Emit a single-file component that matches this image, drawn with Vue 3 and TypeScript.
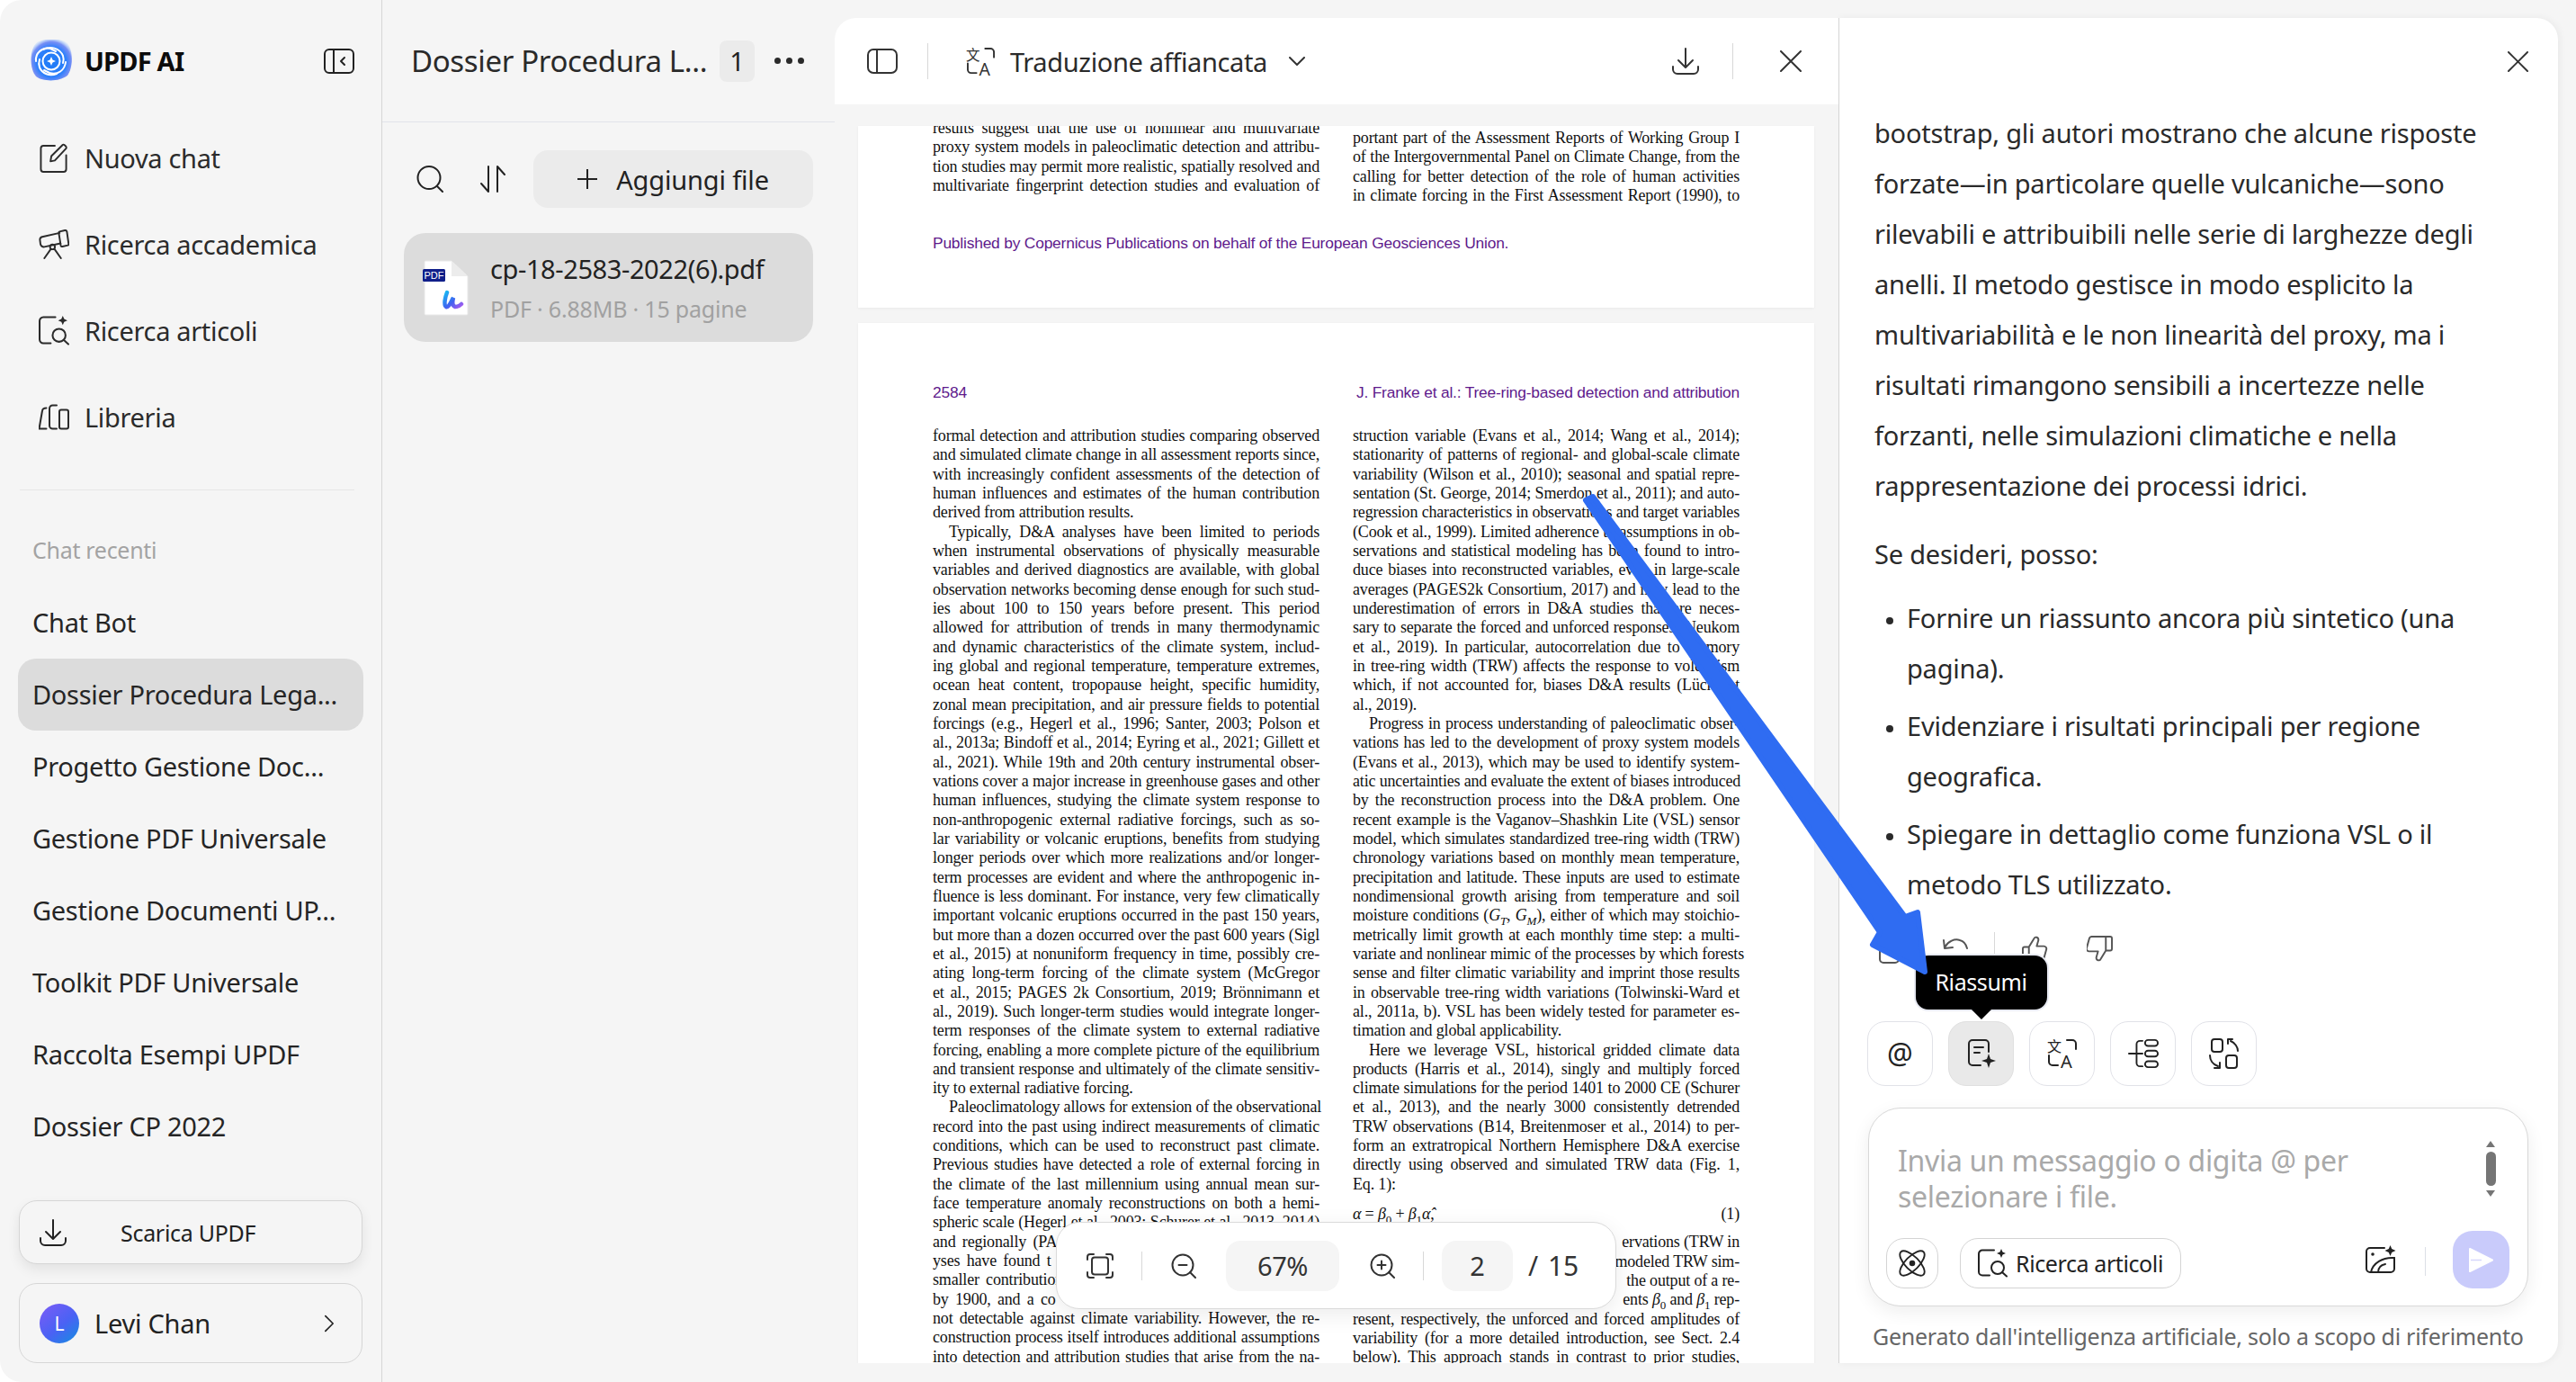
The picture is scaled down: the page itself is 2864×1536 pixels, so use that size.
<template>
  <div class="app">
    <!-- shared icons -->
    <svg class="defs" width="0" height="0">
      <symbol id="i-article" viewBox="0 0 33 32">
        <path d="M18 1.500H5a4 4 0 0 0-4 4v20a4 4 0 0 0 4 4h8" />
        <circle cx="22" cy="21" r="7" />
        <path d="M27 26l5 4.500" />
        <path d="M26 0l1.500 3.500L31 5l-3.500 1.500L26 10l-1.500-3.500L21 5l3.500-1.500z" fill="currentColor" stroke="none" />
      </symbol>
      <symbol id="i-download" viewBox="0 0 30 30">
        <path d="M15 1v20M7 14l8 8 8-8M1 21v3a5 5 0 0 0 5 5h18a5 5 0 0 0 5-5v-3" />
      </symbol>
      <symbol id="i-close" viewBox="0 0 24 24">
        <path d="M1 1l22 22M23 1L1 23" />
      </symbol>
    </svg>

    <!-- left navigation -->
    <aside class="sidebar">
      <div class="brand">
        <svg class="logo" viewBox="0 0 48 46">
          <defs>
            <radialGradient id="logoFill" cx="50%" cy="56%" r="60%">
              <stop offset="0" stop-color="#1f7bf6" />
              <stop offset="0.6" stop-color="#2d80fb" />
              <stop offset="0.82" stop-color="#5f7cf5" stop-opacity="0.85" />
              <stop offset="1" stop-color="#9fd0ff" stop-opacity="0.15" />
            </radialGradient>
          </defs>
          <path d="M8 3c10-5 27-5 34 1 7 9 6 28 0 36-9 7-27 7-35 1C0 33-1 11 8 3z" fill="url(#logoFill)" />
          <g fill="none" stroke="#fff" stroke-width="2" stroke-linecap="round">
            <path d="M15 11c8-4 18-2 22 7 1 3 1 5 0 8" />
            <path d="M40 25c-1 9-9 15-18 12-2-1-4-2-6-3" />
            <path d="M30 38c-8 3-16 0-19-7-1-3-1-6 0-9" />
            <path d="M7 24C6 15 14 8 23 10c2 1 4 2 6 3" />
            <circle cx="24" cy="24" r="9.500" />
          </g>
          <path d="M24 19l1.500 3.500L29 24l-3.500 1.500L24 29l-1.500-3.500L19 24l3.500-1.500z" fill="#fff" />
        </svg>
        <span class="brand-name">UPDF AI</span>
        <svg class="brand-toggle ic" viewBox="0 0 34 28">
          <rect x="1" y="1" width="32" height="26" rx="5" />
          <path d="M11 1v26M23 10l-4 4 4 4" />
        </svg>
      </div>

      <nav class="nav">
        <div class="nav-item">
          <svg class="nav-ic ic" viewBox="0 0 34 34">
            <path d="M18 3H5a3 3 0 0 0-3 3v24a3 3 0 0 0 3 3h23a3 3 0 0 0 3-3V14" />
            <path d="M13 21l1-6L27 2c1-1 5 2 4 4L18 20z" />
          </svg>
          <span>Nuova chat</span>
        </div>
        <div class="nav-item">
          <svg class="nav-ic ic" viewBox="0 0 34 34">
            <path d="M23.500 4L3.500 8.500A3.500 3.500 0 0 0 1 12.500l.5 4a4 4 0 0 0 4.500 3.500l18.500-4" />
            <path d="M22.500 4a1.500 1.500 0 0 1 1-1.500l6-1.500a2 2 0 0 1 2.300 1.500l2 14a1.500 1.500 0 0 1-1 1.700l-6 1.300a1.500 1.500 0 0 1-2-1z" />
            <circle cx="15.300" cy="20" r="2.800" />
            <path d="M13 23l-7 10M18 23l7 10" />
          </svg>
          <span>Ricerca accademica</span>
        </div>
        <div class="nav-item">
          <svg class="nav-ic ic"><use href="#i-article" /></svg>
          <span>Ricerca articoli</span>
        </div>
        <div class="nav-item">
          <svg class="nav-ic ic" viewBox="0 0 34 30">
            <path d="M.5 28L4 8c.3-2 2-3 4.500-3M.5 28h8" />
            <path d="M20 2h-4.500A3.500 3.500 0 0 0 12 5.500v19a3.500 3.500 0 0 0 3.500 3.500H20" />
            <rect x="23" y="7" width="10" height="21" rx="2" />
          </svg>
          <span>Libreria</span>
        </div>
      </nav>

      <div class="side-rule"></div>
      <div class="recent-label">Chat recenti</div>
      <div class="recent">
        <div v-for="c in chats" :key="c" class="recent-item" :class="{ active: c === activeChat }">{{ c }}</div>
      </div>

      <div class="side-bottom">
        <div class="get-app">
          <svg class="get-ic ic"><use href="#i-download" /></svg>
          <span>Scarica UPDF</span>
        </div>
        <div class="account">
          <span class="avatar">L</span>
          <span class="account-name">Levi Chan</span>
          <svg class="account-arrow ic" viewBox="0 0 12 22"><path d="M1 1l10 10L1 21" /></svg>
        </div>
      </div>
    </aside>

    <!-- file list -->
    <section class="files">
      <header class="files-head">
        <span class="files-title">Dossier Procedura L...</span>
        <span class="files-count">1</span>
        <span class="dots"><i></i><i></i><i></i></span>
      </header>
      <div class="files-tools">
        <svg class="tool-search ic" viewBox="0 0 30 30">
          <circle cx="14" cy="13.500" r="12.500" />
          <path d="M23 23l6 6" />
        </svg>
        <svg class="tool-sort ic" viewBox="0 0 28 30">
          <path d="M9 1v28L1 20M19 29V1l8 9" />
        </svg>
        <button class="add-file">
          <svg class="add-ic ic" viewBox="0 0 22 22"><path d="M11 0v22M0 11h22" /></svg>
          <span>Aggiungi file</span>
        </button>
      </div>
      <div class="file-card">
        <svg class="file-ic" viewBox="0 0 52 62">
          <defs>
            <linearGradient id="uFill" x1="0" y1="0" x2="1" y2="1">
              <stop offset="0" stop-color="#18b7f2" />
              <stop offset="0.55" stop-color="#3f63f0" />
              <stop offset="1" stop-color="#a35cf0" />
            </linearGradient>
          </defs>
          <path d="M4 1h29l18 17v42a1 1 0 0 1-1 1H4a1 1 0 0 1-1-1V2a1 1 0 0 1 1-1z" fill="#fff" stroke="#e8e8e8" />
          <path d="M33 1l18 17H33z" fill="#ececec" />
          <rect x="1" y="10" width="25" height="14" rx="1.500" fill="#101f8a" />
          <text x="13.500" y="21" text-anchor="middle" font-size="11" fill="#fff" font-family="'Liberation Sans', sans-serif">PDF</text>
          <path d="M28 36c-2 5-4 14-1 16 3 1 5-5 8-10-1 4-1 9 2 10 2 0 5-1 7-3" fill="none" stroke="url(#uFill)" stroke-width="4.500" stroke-linecap="round" />
        </svg>
        <div class="file-text">
          <div class="file-name">cp-18-2583-2022(6).pdf</div>
          <div class="file-meta">PDF · 6.88MB · 15 pagine</div>
        </div>
      </div>
    </section>

    <!-- pdf viewer -->
    <section class="doc">
      <header class="doc-head">
        <svg class="doc-panel ic" viewBox="0 0 34 28">
          <rect x="1" y="1" width="32" height="26" rx="6" />
          <path d="M11 1v26" />
        </svg>
        <span class="doc-rule"></span>
        <svg class="doc-trans ic" viewBox="0 0 34 34">
          <text x="0" y="15" font-size="16" fill="currentColor" stroke="none" font-family="'Noto Sans CJK SC', sans-serif">文</text>
          <text x="15" y="33" font-size="20" fill="currentColor" stroke="none" font-family="'Noto Sans', sans-serif">A</text>
          <path d="M22 2h6a4 4 0 0 1 4 4v6M2 19v7a4 4 0 0 0 4 4h6" />
        </svg>
        <span class="doc-mode">Traduzione affiancata</span>
        <svg class="doc-chev ic" viewBox="0 0 18 10"><path d="M1 1l8 8 8-8" /></svg>
        <svg class="doc-dl ic"><use href="#i-download" /></svg>
        <span class="doc-rule right"></span>
        <svg class="doc-x ic"><use href="#i-close" /></svg>
      </header>

      <div class="pdf">
        <div class="page page-one">
          <div class="cols cols-one">
            <div class="col">
              <div v-for="(l, i) in prevLeft" :key="i" class="ln">{{ l }}</div>
            </div>
            <div class="col col-shift">
              <div v-for="(l, i) in prevRight" :key="i" class="ln">{{ l }}</div>
            </div>
          </div>
          <div class="pub">Published by Copernicus Publications on behalf of the European Geosciences Union.</div>
        </div>

        <div class="page page-two">
          <div class="running">
            <span>2584</span>
            <span>J. Franke et al.: Tree-ring-based detection and attribution</span>
          </div>
          <div class="cols">
            <div class="col">
              <div v-for="(l, i) in leftCol" :key="i" class="ln" :class="lineClass(l)">{{ lineText(l) }}</div>
            </div>
            <div class="col">
              <template v-for="(l, i) in rightCol" :key="i">
                <div v-if="l === '='" class="ln eq">
                  <span class="eq-body"><i>α</i> = <i>β</i><sub>0</sub> + <i>β</i><sub>1</sub><i>α̂</i>,</span>
                  <span>(1)</span>
                </div>
                <div v-else-if="l === 'G'" class="ln">moisture conditions (<i>G</i><sub><i>T</i></sub>, <i>G</i><sub><i>M</i></sub>), either of which may stoichio-</div>
                <div v-else-if="l === 'B'" class="ln frag-r">ents <i>β</i><sub>0</sub> and <i>β</i><sub>1</sub> rep-</div>
                <div v-else class="ln" :class="lineClass(l)">{{ lineText(l) }}</div>
              </template>
            </div>
          </div>
        </div>

        <div class="zoombar">
          <svg class="zb-fit ic" viewBox="0 0 30 28">
            <rect x="6" y="4.500" width="18" height="19" rx="3" />
            <path d="M1 7V4a3 3 0 0 1 3-3h4M22 1h4a3 3 0 0 1 3 3v3M1 21v3a3 3 0 0 0 3 3h4M22 27h4a3 3 0 0 0 3-3v-3" />
          </svg>
          <span class="zb-rule"></span>
          <svg class="zb-mag ic" viewBox="0 0 28 28">
            <circle cx="13" cy="13" r="11.500" />
            <path d="M21 21l6 6M8.500 13h9" />
          </svg>
          <span class="zb-pct">67%</span>
          <svg class="zb-mag ic" viewBox="0 0 28 28">
            <circle cx="13" cy="13" r="11.500" />
            <path d="M21 21l6 6M8.500 13h9M13 8.500v9" />
          </svg>
          <span class="zb-rule"></span>
          <span class="zb-page">2</span>
          <span class="zb-total">/ 15</span>
        </div>
      </div>
    </section>

    <!-- assistant -->
    <section class="chat">
      <header class="chat-head">
        <svg class="chat-x ic"><use href="#i-close" /></svg>
      </header>
      <div class="answer">
        <p class="para">bootstrap, gli autori mostrano che alcune risposte forzate—in particolare quelle vulcaniche—sono rilevabili e attribuibili nelle serie di larghezze degli anelli. Il metodo gestisce in modo esplicito la multivariabilità e le non linearità del proxy, ma i risultati rimangono sensibili a incertezze nelle forzanti, nelle simulazioni climatiche e nella rappresentazione dei processi idrici.</p>
        <p class="para offer">Se desideri, posso:</p>
        <ul class="offers">
          <li>Fornire un riassunto ancora più sintetico (una pagina).</li>
          <li>Evidenziare i risultati principali per regione geografica.</li>
          <li>Spiegare in dettaglio come funziona VSL o il metodo TLS utilizzato.</li>
        </ul>
        <div class="reactions">
          <svg class="re-copy ic" viewBox="0 0 30 30">
            <rect x="1" y="8" width="21" height="21" rx="4" />
            <path d="M8 4a3 3 0 0 1 3-3h15a3 3 0 0 1 3 3v15" />
          </svg>
          <svg class="re-undo ic" viewBox="0 0 28 24">
            <path d="M2 11C6 4 13 1 19 3c4 1 7 5 8 9M1 3l1 9 9-1" />
          </svg>
          <span class="re-rule"></span>
          <svg class="re-thumb ic" viewBox="0 0 30 30">
            <path d="M8 13v16M1 15a2 2 0 0 1 2-2h5l6-10c1-2 5-2 5 2l-2 7h8a3 3 0 0 1 3 4l-3 11a3 3 0 0 1-3 2H3a2 2 0 0 1-2-2z" />
          </svg>
          <svg class="re-thumb down ic" viewBox="0 0 30 30">
            <path d="M22 17V1M29 15a2 2 0 0 1-2 2h-5l-6 10c-1 2-5 2-5-2l2-7H3a3 3 0 0 1-3-4l3-11a3 3 0 0 1 3-2h21a2 2 0 0 1 2 2z" />
          </svg>
        </div>
      </div>

      <div class="quick">
        <button class="q-btn"><span class="q-at">@</span></button>
        <button class="q-btn on">
          <svg class="q-ic ic" viewBox="0 0 34 34">
            <path d="M16 30H7a4 4 0 0 1-4-4V6a4 4 0 0 1 4-4h14a4 4 0 0 1 4 4v9M9 10h10M9 16h6" />
            <path d="M25 17l2 6 6 2-6 2-2 6-2-6-6-2 6-2z" fill="currentColor" stroke="none" />
          </svg>
          <span class="tip">Riassumi</span>
        </button>
        <button class="q-btn">
          <svg class="q-ic ic" viewBox="0 0 34 34">
            <text x="0" y="15" font-size="16" fill="currentColor" stroke="none" font-family="'Noto Sans CJK SC', sans-serif">文</text>
            <text x="15" y="33" font-size="20" fill="currentColor" stroke="none" font-family="'Noto Sans', sans-serif">A</text>
            <path d="M22 2h6a4 4 0 0 1 4 4v6M2 19v7a4 4 0 0 0 4 4h6" />
          </svg>
        </button>
        <button class="q-btn">
          <svg class="q-ic ic" viewBox="0 0 36 34">
            <path d="M1 17h16M17 2h-3a4 4 0 0 0-4 4v22a4 4 0 0 0 4 4h3" />
            <rect x="20" y="1" width="15" height="7" rx="3.500" />
            <rect x="20" y="13.500" width="15" height="7" rx="3.500" />
            <rect x="20" y="26" width="15" height="7" rx="3.500" />
          </svg>
        </button>
        <button class="q-btn">
          <svg class="q-ic ic" viewBox="0 0 34 34">
            <rect x="3" y="1" width="12" height="14" rx="3" />
            <rect x="19" y="19" width="12" height="14" rx="3" />
            <path d="M32 14c0-4-3-9-8-11M21 1h5M21 1v5M1 19c0 5 3 10 9 12M12 33H6M12 33v-6" />
          </svg>
        </button>
      </div>

      <div class="composer">
        <div class="prompt">
          <div class="placeholder">Invia un messaggio o digita @ per selezionare i file.</div>
          <div class="scroll">
            <i class="arr up"></i>
            <i class="thumb"></i>
            <i class="arr dn"></i>
          </div>
        </div>
        <div class="composer-row">
          <button class="pill atom">
            <svg class="atom-ic ic" viewBox="0 0 32 32">
              <ellipse cx="16" cy="16" rx="8" ry="19" transform="rotate(-45 16 16)" />
              <ellipse cx="16" cy="16" rx="8" ry="19" transform="rotate(45 16 16)" />
              <circle cx="16" cy="16" r="3.500" fill="currentColor" stroke="none" />
            </svg>
          </button>
          <button class="pill articles">
            <svg class="art-ic ic"><use href="#i-article" /></svg>
            <span>Ricerca articoli</span>
          </button>
          <svg class="img-ic ic" viewBox="0 0 34 32">
            <path d="M21 3H5a4 4 0 0 0-4 4v19a4 4 0 0 0 4 4h23a4 4 0 0 0 4-4V14" />
            <circle cx="8" cy="10" r="1.800" fill="currentColor" stroke="none" />
            <path d="M6 30c2-10 13-17 26-16M14 30c0-5 3-8 8-9" />
            <path d="M27.500 0l1.700 4 4.300 2-4.300 2-1.700 4-1.700-4-4.300-2 4.300-2z" fill="currentColor" stroke="none" />
          </svg>
          <span class="row-rule"></span>
          <button class="send">
            <svg class="send-ic" viewBox="0 0 29 29">
              <path d="M2 2l25 12.500L2 27z" fill="#fff" stroke="#fff" stroke-width="2" stroke-linejoin="round" />
              <path d="M3 14.500h12" fill="none" stroke="#d6d7fb" stroke-width="1.500" />
            </svg>
          </button>
        </div>
      </div>
      <div class="disclaimer">Generato dall'intelligenza artificiale, solo a scopo di riferimento</div>
    </section>

    <!-- annotation drawn over the screenshot -->
    <svg class="annot" viewBox="0 0 2864 1536">
      <path d="M1763 556L1771 552L2118 1019L2132 1014L2140 1080L2082 1050L2090 1036Z" fill="#2f6cf2" stroke="#2f6cf2" stroke-width="6" stroke-linejoin="round" />
    </svg>
  </div>
</template>

<script setup lang="ts">
const chats = [
  'Chat Bot',
  'Dossier Procedura Lega...',
  'Progetto Gestione Doc...',
  'Gestione PDF Universale',
  'Gestione Documenti UP...',
  'Toolkit PDF Universale',
  'Raccolta Esempi UPDF',
  'Dossier CP 2022',
]
const activeChat = 'Dossier Procedura Lega...'

const prevLeft = [
  'results suggest that the use of nonlinear and multivariate',
  'proxy system models in paleoclimatic detection and attribu-',
  'tion studies may permit more realistic, spatially resolved and',
  'multivariate fingerprint detection studies and evaluation of',
]
const prevRight = [
  'portant part of the Assessment Reports of Working Group I',
  'of the Intergovernmental Panel on Climate Change, from the',
  'calling for better detection of the role of human activities',
  'in climate forcing in the First Assessment Report (1990), to',
]

// ">" at the start indents, "|" at the end closes a paragraph,
// "<" and "~" mark the parts of a line that the zoom bar leaves visible
const leftCol = [
  'formal detection and attribution studies comparing observed',
  'and simulated climate change in all assessment reports since,',
  'with increasingly confident assessments of the detection of',
  'human influences and estimates of the human contribution',
  'derived from attribution results.|',
  '>Typically, D&A analyses have been limited to periods',
  'when instrumental observations of physically measurable',
  'variables and derived diagnostics are available, with global',
  'observation networks becoming dense enough for such stud-',
  'ies about 100 to 150 years before present. This period',
  'allowed for attribution of trends in many thermodynamic',
  'and dynamic characteristics of the climate system, includ-',
  'ing global and regional temperature, temperature extremes,',
  'ocean heat content, tropopause height, specific humidity,',
  'zonal mean precipitation, and air pressure fields to potential',
  'forcings (e.g., Hegerl et al., 1996; Santer, 2003; Polson et',
  'al., 2013a; Bindoff et al., 2014; Eyring et al., 2021; Gillett et',
  'al., 2021). While 19th and 20th century instrumental obser-',
  'vations cover a major increase in greenhouse gases and other',
  'human influences, studying the climate system response to',
  'non-anthropogenic external radiative forcings, such as so-',
  'lar variability or volcanic eruptions, benefits from studying',
  'longer periods over which more realizations and/or longer-',
  'term processes are evident and where the anthropogenic in-',
  'fluence is less dominant. For instance, very few climatically',
  'important volcanic eruptions occurred in the past 150 years,',
  'but more than a dozen occurred over the past 600 years (Sigl',
  'et al., 2015) at nonuniform frequency in time, possibly cre-',
  'ating long-term forcing of the climate system (McGregor',
  'et al., 2015; PAGES 2k Consortium, 2019; Brönnimann et',
  'al., 2019). Such longer-term studies would integrate longer-',
  'term responses of the climate system to external radiative',
  'forcing, enabling a more complete picture of the equilibrium',
  'and transient response and ultimately of the climate sensitiv-',
  'ity to external radiative forcing.|',
  '>Paleoclimatology allows for extension of the observational',
  'record into the past using indirect measurements of climatic',
  'conditions, which can be used to reconstruct past climate.',
  'Previous studies have detected a role of external forcing in',
  'the climate of the last millennium using annual mean sur-',
  'face temperature anomaly reconstructions on both a hemi-',
  'spheric scale (Hegerl et al., 2003; Schurer et al., 2013, 2014)',
  '<and regionally (PA',
  '<yses have found t',
  '<smaller contribution',
  '<by 1900, and a co',
  'not detectable against climate variability. However, the re-',
  'construction process itself introduces additional assumptions',
  'into detection and attribution studies that arise from the na-',
]

const rightCol = [
  'struction variable (Evans et al., 2014; Wang et al., 2014);',
  'stationarity of patterns of regional- and global-scale climate',
  'variability (Wilson et al., 2010); seasonal and spatial repre-',
  'sentation (St. George, 2014; Smerdon et al., 2011); and auto-',
  'regression characteristics in observations and target variables',
  '(Cook et al., 1999). Limited adherence to assumptions in ob-',
  'servations and statistical modeling has been found to intro-',
  'duce biases into reconstructed variables, even in large-scale',
  'averages (PAGES2k Consortium, 2017) and may lead to the',
  'underestimation of errors in D&A studies that are neces-',
  'sary to separate the forced and unforced responses (Neukom',
  'et al., 2019). In particular, autocorrelation due to memory',
  'in tree-ring width (TRW) affects the response to volcanism',
  'which, if not accounted for, biases D&A results (Lücke et',
  'al., 2019).|',
  '>Progress in process understanding of paleoclimatic obser-',
  'vations has led to the development of proxy system models',
  '(Evans et al., 2013), which may be used to identify system-',
  'atic uncertainties and evaluate the extent of biases introduced',
  'by the reconstruction process into the D&A problem. One',
  'recent example is the Vaganov–Shashkin Lite (VSL) sensor',
  'model, which simulates standardized tree-ring width (TRW)',
  'chronology variations based on monthly mean temperature,',
  'precipitation and latitude. These inputs are used to estimate',
  'nondimensional growth arising from temperature and soil',
  'G',
  'metrically limit growth at each monthly time step: a multi-',
  'variate and nonlinear mimic of the processes by which forests',
  'sense and filter climatic variability and imprint those results',
  'in observable tree-ring width variations (Tolwinski-Ward et',
  'al., 2011a, b). VSL has been widely tested for parameter es-',
  'timation and global applicability.|',
  '>Here we leverage VSL, historical gridded climate data',
  'products (Harris et al., 2014), singly and multiply forced',
  'climate simulations for the period 1401 to 2000 CE (Schurer',
  'et al., 2013), and the nearly 3000 consistently detrended',
  'TRW observations (B14, Breitenmoser et al., 2014) to per-',
  'form an extratropical Northern Hemisphere D&A exercise',
  'directly using observed and simulated TRW data (Fig. 1,',
  'Eq. 1):|',
  '=',
  '~ervations (TRW in',
  '~modeled TRW sim-',
  '~the output of a re-',
  'B',
  'resent, respectively, the unforced and forced amplitudes of',
  'variability (for a more detailed introduction, see Sect. 2.4',
  'below). This approach stands in contrast to prior studies,',
]

function lineClass(l: string) {
  return {
    indent: l.startsWith('>'),
    end: l.endsWith('|'),
    'frag-l': l.startsWith('<'),
    'frag-r': l.startsWith('~'),
  }
}

function lineText(l: string) {
  return l.replace(/^[>~<]/, '').replace(/\|$/, '')
}
</script>

<style>
html,
body {
  margin: 0;
  background: #fff;
}
</style>

<style scoped>
.app {
  position: relative;
  display: flex;
  width: 2864px;
  height: 1536px;
  overflow: hidden;
  background: #f5f5f5;
  border-radius: 24px 0 0 24px;
  font-family: "Noto Sans", "Open Sans", sans-serif;
  color: #222;
  box-sizing: border-box;
}

.defs {
  position: absolute;
}

.ic {
  fill: none;
  stroke: currentColor;
  stroke-width: 2;
  stroke-linecap: round;
  stroke-linejoin: round;
  flex: none;
}

button {
  font: inherit;
  color: inherit;
  background: none;
  border: none;
  padding: 0;
}

/* sidebar */
.sidebar {
  width: 425px;
  flex: none;
  display: flex;
  flex-direction: column;
  box-sizing: border-box;
  border-right: 1px solid #d6d6d6;
  padding-bottom: 21px;
}

.brand {
  height: 127px;
  flex: none;
  display: flex;
  align-items: flex-start;
  padding: 44px 30px 0 33px;
  box-sizing: border-box;
}

.logo {
  width: 48px;
  height: 46px;
  flex: none;
}

.brand-name {
  margin-left: 13px;
  font-size: 29px;
  line-height: 48px;
  font-weight: 700;
  color: #0c0c0c;
  letter-spacing: -0.8px;
}

.brand-toggle {
  width: 34px;
  height: 28px;
  margin: 10px 0 0 auto;
}

.nav-item {
  height: 96px;
  display: flex;
  align-items: center;
  padding-left: 43px;
  gap: 17px;
  font-size: 29px;
  letter-spacing: -0.33px;
  color: #2b2b2b;
}

.nav-ic {
  width: 34px;
  height: 33px;
}

.side-rule {
  margin: 33px 30px 0 22px;
  height: 1px;
  background: #e6e6e6;
}

.recent-label {
  margin-top: 48px;
  padding-left: 36px;
  height: 36px;
  line-height: 36px;
  font-size: 25px;
  letter-spacing: -0.3px;
  color: #a3a3a3;
}

.recent {
  margin-top: 23px;
}

.recent-item {
  margin: 0 20px;
  padding-left: 16px;
  height: 80px;
  line-height: 80px;
  font-size: 29px;
  letter-spacing: -0.3px;
  color: #252525;
  border-radius: 20px;
}

.recent-item.active {
  background: #dcdcdc;
}

.side-bottom {
  margin-top: auto;
  padding: 0 21px 0 21px;
  display: flex;
  flex-direction: column;
  gap: 21px;
}

.get-app,
.account {
  box-sizing: border-box;
  display: flex;
  align-items: center;
  background: #f5f5f5;
  border: 1px solid #d6d6d6;
  border-radius: 20px;
}

.get-app {
  height: 71px;
  padding-left: 22px;
  box-shadow: 0 6px 14px rgba(0, 0, 0, 0.08);
  font-size: 25px;
  letter-spacing: -0.3px;
}

.get-ic {
  width: 30px;
  height: 30px;
  margin-right: 60px;
}

.account {
  height: 89px;
  padding: 0 31px 0 22px;
}

.avatar {
  width: 44px;
  height: 44px;
  border-radius: 50%;
  background: linear-gradient(140deg, #7d5cf6, #4a62f4 55%, #138fe0);
  color: #fff;
  font-size: 21px;
  text-align: center;
  line-height: 44px;
}

.account-name {
  margin-left: 17px;
  font-size: 29px;
  letter-spacing: -0.25px;
}

.account-arrow {
  width: 10px;
  height: 20px;
  margin-left: auto;
}

/* files */
.files {
  width: 503px;
  flex: none;
}

.files-head {
  height: 136px;
  box-sizing: border-box;
  border-bottom: 1px solid #e2e3ea;
  display: flex;
  align-items: flex-start;
  padding: 45px 0 0 32px;
}

.files-title {
  width: 343px;
  line-height: 46px;
  font-size: 33px;
  letter-spacing: -0.35px;
  white-space: nowrap;
  color: #2a2a2a;
}

.files-count {
  width: 39px;
  height: 46px;
  line-height: 46px;
  text-align: center;
  font-size: 29px;
  background: #ebebeb;
  border-radius: 8px;
}

.dots {
  display: flex;
  gap: 6px;
  margin: 19px 0 0 22px;
}

.dots i {
  width: 7px;
  height: 7px;
  border-radius: 50%;
  background: #2a2a2a;
}

.files-tools {
  display: flex;
  align-items: center;
  margin-top: 31px;
  padding-left: 38px;
}

.tool-search {
  width: 30px;
  height: 30px;
}

.tool-sort {
  width: 28px;
  height: 30px;
  margin-left: 41px;
}

.add-file {
  width: 311px;
  height: 64px;
  margin-left: 31px;
  border-radius: 16px;
  background: #ebebeb;
  display: flex;
  align-items: center;
  justify-content: center;
  gap: 21px;
  font-size: 29px;
  letter-spacing: -0.15px;
}

.add-ic {
  width: 22px;
  height: 22px;
}

.file-card {
  margin: 28px 0 0 24px;
  width: 455px;
  height: 121px;
  box-sizing: border-box;
  background: #dcdcdc;
  border-radius: 24px;
  display: flex;
  align-items: center;
  padding-left: 20px;
}

.file-ic {
  width: 52px;
  height: 62px;
  flex: none;
}

.file-text {
  margin-left: 24px;
}

.file-name {
  font-size: 29px;
  line-height: 40px;
  letter-spacing: -0.4px;
  white-space: nowrap;
}

.file-meta {
  margin-top: 6px;
  font-size: 25px;
  line-height: 36px;
  letter-spacing: -0.2px;
  color: #a1a1a1;
  white-space: nowrap;
}

/* pdf viewer */
.doc {
  position: relative;
  width: 1116px;
  flex: none;
  margin: 20px 0 21px;
  background: #f5f5f5;
  border-radius: 24px 0 0 0;
  display: flex;
  flex-direction: column;
  overflow: hidden;
}

.doc-head {
  height: 96px;
  flex: none;
  background: #fff;
  display: flex;
  align-items: center;
  padding-left: 36px;
  color: #333;
}

.doc-panel {
  width: 34px;
  height: 28px;
}

.doc-rule {
  width: 1px;
  height: 40px;
  background: #d8d8d8;
  margin: 0 42px 0 33px;
}

.doc-rule.right {
  margin: 0 52px 0 37px;
}

.doc-trans {
  width: 33px;
  height: 33px;
}

.doc-mode {
  margin-left: 16px;
  font-size: 29px;
  letter-spacing: -0.35px;
  color: #2b2b2b;
}

.doc-chev {
  width: 18px;
  height: 10px;
  margin-left: 24px;
  margin-right: auto;
}

.doc-dl {
  width: 30px;
  height: 30px;
}

.doc-x {
  width: 24px;
  height: 24px;
  margin-right: 41px;
}

.pdf {
  flex: 1;
  min-height: 0;
  padding: 24px 27px 0 26px;
  font-family: "Liberation Serif", serif;
  color: #111;
}

.page {
  background: #fff;
  box-shadow: 0 1px 3px rgba(0, 0, 0, 0.05);
  padding: 0 83px 0 83px;
}

.page-one {
  height: 202px;
  overflow: hidden;
  margin-bottom: 17px;
}

.cols {
  display: grid;
  grid-template-columns: 430px 430px;
  column-gap: 37px;
}

.cols-one {
  margin-top: -8px;
}

.col-shift {
  margin-top: 11px;
}

.ln {
  height: 21.34px;
  line-height: 21.34px;
  font-size: 18px;
  letter-spacing: -0.17px;
  white-space: nowrap;
  text-align: justify;
  text-align-last: justify;
}

.ln.indent {
  padding-left: 18px;
}

.ln.end,
.ln.frag-l {
  text-align-last: left;
}

.ln.frag-l {
  word-spacing: 3px;
}

.ln.frag-r {
  text-align-last: right;
}

.ln sub {
  font-size: 13px;
  line-height: 0;
}

.eq {
  display: flex;
  justify-content: space-between;
  margin: 12px 0 10px;
}

.pub {
  margin-top: 31px;
  font-family: "Liberation Sans", sans-serif;
  font-size: 17.4px;
  line-height: 22px;
  letter-spacing: -0.2px;
  color: #5e1a8c;
}

.page-two {
  padding-top: 66px;
  height: 1157px;
  box-sizing: border-box;
}

.running {
  display: flex;
  justify-content: space-between;
  width: 897px;
  margin-bottom: 27px;
  font-family: "Liberation Sans", sans-serif;
  font-size: 17.4px;
  line-height: 22px;
  letter-spacing: -0.2px;
  color: #5e1a8c;
}

.zoombar {
  position: absolute;
  left: 246px;
  top: 1338px;
  width: 623px;
  height: 97px;
  box-sizing: border-box;
  background: #fff;
  border: 1px solid #dadada;
  border-radius: 26px;
  box-shadow: 0 6px 24px rgba(0, 0, 0, 0.08);
  display: flex;
  align-items: center;
  padding-left: 33px;
  font-family: "Noto Sans", sans-serif;
  color: #333;
}

.zb-fit {
  width: 30px;
  height: 28px;
}

.zb-rule {
  width: 1px;
  height: 32px;
  background: #d8d8d8;
  margin: 0 32px 0 31px;
}

.zb-mag {
  width: 28px;
  height: 28px;
}

.zb-pct {
  width: 126px;
  height: 56px;
  line-height: 56px;
  margin: 0 34px 0 33px;
  text-align: center;
  background: #f5f5f5;
  border-radius: 16px;
  font-size: 29px;
  letter-spacing: -0.5px;
}

.zb-mag + .zb-rule {
  margin-right: 20px;
}

.zb-page {
  width: 79px;
  height: 56px;
  line-height: 56px;
  text-align: center;
  background: #f5f5f5;
  border-radius: 16px;
  font-size: 29px;
}

.zb-total {
  margin-left: 17px;
  font-size: 30px;
  word-spacing: 3px;
}

/* assistant */
.chat {
  width: 800px;
  flex: none;
  margin: 20px 0 21px;
  background: #fff;
  border-left: 1px solid #d4d4d4;
  box-sizing: border-box;
  border-radius: 0 24px 24px 0;
  box-shadow: 2px 0 8px rgba(0, 0, 0, 0.05);
  display: flex;
  flex-direction: column;
}

.chat-head {
  height: 100px;
  flex: none;
  display: flex;
  justify-content: flex-end;
  padding: 37px 33px 0 0;
  box-sizing: border-box;
  color: #333;
}

.chat-x {
  width: 23px;
  height: 23px;
}

.answer {
  padding: 0 0 0 39px;
  width: 722px;
  height: 1015px;
  flex: none;
  box-sizing: border-box;
  font-size: 29px;
  line-height: 56px;
  letter-spacing: -0.22px;
  color: #2a2a2a;
}

.para {
  margin: 0;
}

.offer {
  margin-top: 20px;
}

.offers {
  margin: 15px 0 0;
  padding: 0 0 0 36px;
}

.offers li {
  margin-bottom: 8px;
}

.offers li::marker {
  font-size: 22px;
}

.reactions {
  position: relative;
  margin-top: 25px;
  height: 36px;
  display: flex;
  align-items: center;
  color: #555;
}

.re-copy {
  width: 30px;
  height: 30px;
  margin: 4px 0 0 5px;
}

.re-undo {
  width: 28px;
  height: 24px;
  margin-left: 41px;
}

.re-rule {
  width: 1px;
  height: 36px;
  background: #d8d8d8;
  margin: 0 30px 0 29px;
}

.re-thumb {
  width: 29px;
  height: 29px;
}

.re-thumb.down {
  margin-left: 43px;
}

.quick {
  display: flex;
  gap: 17px;
  padding-left: 31px;
  margin-top: 0;
}

.q-btn {
  position: relative;
  width: 73px;
  height: 72px;
  box-sizing: border-box;
  border: 1px solid #e1e2e8;
  border-radius: 20px;
  display: flex;
  align-items: center;
  justify-content: center;
  color: #222;
}

.q-btn.on {
  background: #e9e9e9;
  border-color: #e0e0e0;
}

.q-at {
  font-size: 32px;
  line-height: 1;
}

.q-ic {
  width: 34px;
  height: 34px;
}

.tip {
  position: absolute;
  left: 50%;
  bottom: calc(100% + 14px);
  transform: translateX(-50%);
  height: 60px;
  line-height: 58px;
  padding: 0 22px;
  background: #000;
  color: #fff;
  font-size: 25px;
  letter-spacing: -0.4px;
  white-space: nowrap;
  border-radius: 14px;
  box-shadow: 0 0 0 2px #e8eaf2;
}

.tip::after {
  content: "";
  position: absolute;
  left: 50%;
  top: 100%;
  margin-left: -11px;
  border-left: 11px solid transparent;
  border-right: 11px solid transparent;
  border-top: 11px solid #000;
}

.composer {
  margin: 24px 33px 0 32px;
  height: 221px;
  box-sizing: border-box;
  border: 1px solid #d8d8d8;
  border-radius: 36px;
  box-shadow: 0 6px 20px rgba(0, 0, 0, 0.07);
  display: flex;
  flex-direction: column;
  background: #fff;
}

.prompt {
  display: flex;
  height: 136px;
  padding: 38px 0 0 32px;
  box-sizing: border-box;
}

.placeholder {
  width: 540px;
  font-size: 32px;
  line-height: 40px;
  letter-spacing: -0.3px;
  color: #a9a9a9;
}

.scroll {
  margin: -2px 0 0 113px;
  width: 12px;
  display: flex;
  flex-direction: column;
  align-items: center;
}

.thumb {
  width: 11px;
  height: 38px;
  margin: 5px 0;
  border-radius: 6px;
  background: #757575;
}

.arr {
  width: 0;
  height: 0;
  border-left: 5px solid transparent;
  border-right: 5px solid transparent;
}

.arr.up {
  border-bottom: 7px solid #757575;
}

.arr.dn {
  border-top: 7px solid #757575;
}

.composer-row {
  display: flex;
  align-items: flex-end;
  padding: 0 20px 0 19px;
}

.pill {
  height: 56px;
  box-sizing: border-box;
  border: 1px solid #d4d4d4;
  border-radius: 20px;
  display: flex;
  align-items: center;
  justify-content: center;
}

.atom {
  width: 58px;
}

.atom-ic {
  width: 30px;
  height: 30px;
}

.articles {
  width: 246px;
  margin-left: 24px;
  gap: 9px;
  font-size: 25px;
  letter-spacing: -0.4px;
}

.art-ic {
  width: 33px;
  height: 32px;
}

.img-ic {
  width: 34px;
  height: 32px;
  margin: 0 0 16px auto;
}

.row-rule {
  width: 1px;
  height: 32px;
  margin: 0 30px 14px 32px;
  background: #dcdfe6;
}

.send {
  width: 63px;
  height: 64px;
  border-radius: 22px;
  background: #c9cbfb;
  display: flex;
  align-items: center;
  justify-content: center;
}

.send-ic {
  width: 29px;
  height: 29px;
}

.disclaimer {
  margin: 19px 0 0 37px;
  font-size: 25px;
  line-height: 28px;
  letter-spacing: -0.25px;
  color: #666;
  white-space: nowrap;
}

.annot {
  position: absolute;
  inset: 0;
  width: 2864px;
  height: 1536px;
  pointer-events: none;
}
</style>
